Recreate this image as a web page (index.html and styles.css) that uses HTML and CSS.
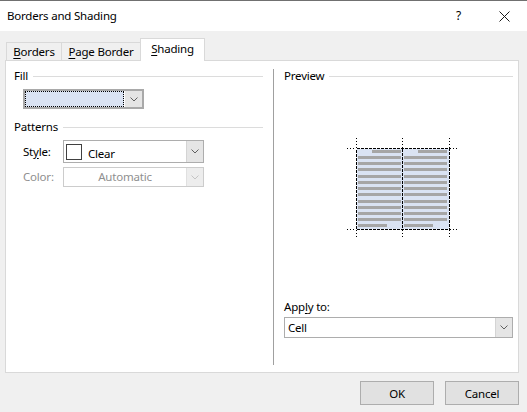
FILE: index.html
```html
<!DOCTYPE html>
<html>
<head>
<meta charset="utf-8">
<link rel="stylesheet" href="styles.css">
</head>
<body>
<div class="titlebar">
  <span class="title">Borders and Shading</span>
  <span class="help">?</span>
  <svg class="close" width="11" height="11" viewBox="0 0 11 11"><path d="M0.5 0.5 L10.5 10.5 M10.5 0.5 L0.5 10.5" stroke="#1a1a1a" stroke-width="1" fill="none"/></svg>
</div>
<div class="tabs">
  <div class="tab t-borders"><u>B</u>orders</div>
  <div class="tab t-page"><u>P</u>age Border</div>
  <div class="tab t-shading active"><u>S</u>hading</div>
</div>
<div class="panel">
  <div class="col left">
    <div class="group-h"><span>Fill</span><i class="rule"></i></div>
    <div class="combo fill">
      <div class="val"><div class="focus"></div></div>
      <div class="btn"><svg width="8" height="5" viewBox="0 0 8 5"><path d="M0.5 0.5 L4 4 L7.5 0.5" stroke="#606060" fill="none"/></svg></div>
    </div>
    <div class="group-h patterns"><span>Patterns</span><i class="rule"></i></div>
    <div class="row style-row">
      <span class="lbl">St<u>y</u>le:</span>
      <div class="combo style">
        <div class="val"><span class="swatch"></span><span class="clear">Clear</span></div>
        <div class="btn"><svg width="8" height="5" viewBox="0 0 8 5"><path d="M0.5 0.5 L4 4 L7.5 0.5" stroke="#606060" fill="none"/></svg></div>
      </div>
    </div>
    <div class="row color-row disabled">
      <span class="lbl">Color:</span>
      <div class="combo color">
        <div class="val center">Automatic</div>
        <div class="btn"><svg width="8" height="5" viewBox="0 0 8 5"><path d="M0.5 0.5 L4 4 L7.5 0.5" stroke="#c4c4c4" fill="none"/></svg></div>
      </div>
    </div>
  </div>
  <div class="divider"></div>
  <div class="col right">
    <div class="group-h"><span>Preview</span><i class="rule"></i></div>
    <svg class="preview" width="112" height="101" viewBox="347 138 112 101" shape-rendering="crispEdges">
      <rect x="357" y="149" width="92" height="80" fill="#dae3f3"/>
      <g fill="#a6a6a6">
        <rect x="372" y="150" width="29" height="3"/>
        <rect x="358" y="156" width="43" height="3"/>
        <rect x="358" y="162" width="43" height="3"/>
        <rect x="358" y="168" width="43" height="3"/>
        <rect x="358" y="175" width="43" height="3"/>
        <rect x="358" y="181" width="43" height="3"/>
        <rect x="358" y="187" width="43" height="3"/>
        <rect x="358" y="193" width="43" height="3"/>
        <rect x="358" y="200" width="43" height="3"/>
        <rect x="358" y="206" width="43" height="3"/>
        <rect x="358" y="212" width="43" height="3"/>
        <rect x="358" y="218" width="43" height="3"/>
        <rect x="358" y="224" width="29" height="3"/>
        <rect x="418" y="150" width="29" height="3"/>
        <rect x="404" y="156" width="43" height="3"/>
        <rect x="404" y="162" width="43" height="3"/>
        <rect x="404" y="168" width="43" height="3"/>
        <rect x="404" y="175" width="43" height="3"/>
        <rect x="404" y="181" width="43" height="3"/>
        <rect x="404" y="187" width="43" height="3"/>
        <rect x="404" y="193" width="43" height="3"/>
        <rect x="404" y="200" width="43" height="3"/>
        <rect x="404" y="206" width="43" height="3"/>
        <rect x="404" y="212" width="43" height="3"/>
        <rect x="404" y="218" width="43" height="3"/>
        <rect x="404" y="224" width="29" height="3"/>
      </g>
      <g stroke="#000" stroke-width="1" fill="none" stroke-dasharray="3 1">
        <rect x="356.5" y="148.5" width="93" height="81"/>
        <path d="M402.5 148.5 V229.5"/>
      </g>
      <g stroke="#000" stroke-width="1" fill="none" stroke-dasharray="1 2">
        <path d="M347 148.5 H356 M450 148.5 H459 M347 229.5 H356 M450 229.5 H459"/>
        <path d="M356.5 138 V148 M402.5 138 V148 M449.5 138 V148 M356.5 230 V239 M402.5 230 V239 M449.5 230 V239"/>
      </g>
    </svg>
    <div class="apply-lbl">App<u>l</u>y to:</div>
    <div class="combo apply">
      <div class="val">Cell</div>
      <div class="btn"><svg width="8" height="5" viewBox="0 0 8 5"><path d="M0.5 0.5 L4 4 L7.5 0.5" stroke="#606060" fill="none"/></svg></div>
    </div>
  </div>
</div>
<div class="footer">
  <button class="b">OK</button>
  <button class="b">Cancel</button>
</div>
</body>
</html>
```
FILE: styles.css
```css
* { box-sizing: border-box; }
html, body { margin: 0; padding: 0; }
body {
  width: 527px;
  height: 412px;
  overflow: hidden;
  background: #f0f0f0;
  font-family: "Noto Sans", "DejaVu Sans", sans-serif;
  font-size: 11.5px;
  letter-spacing: -0.2px;
  line-height: 16px;
  color: #000;
}
u { text-decoration: underline; text-underline-offset: 2px; }

.titlebar {
  height: 31px;
  background: #fff;
  border-top: 1px solid #707070;
  display: flex;
  align-items: center;
  padding-left: 7px;
}
.title { flex: 1; }
.help { margin-right: 38px; font-size: 12px; }
.close { margin-right: 17px; display: block; }

.tabs {
  height: 29px;
  display: flex;
  align-items: flex-end;
  padding-left: 6px;
}
.tab {
  height: 18px;
  border: 1px solid #d9d9d9;
  border-bottom: none;
  background: #f0f0f0;
  display: flex;
  align-items: center;
  justify-content: center;
  padding-top: 1px;
}
.t-borders { width: 56px; }
.t-page { width: 80px; margin-left: -1px; }
.t-shading { width: 65px; margin-left: -1px; }
.tab.active {
  height: 23px;
  background: #fff;
  margin-bottom: -1px;
  position: relative;
  padding-top: 0;
  padding-bottom: 2px;
}

.panel {
  margin-left: 5px;
  width: 514px;
  height: 313px;
  background: #fff;
  border: 1px solid #d9d9d9;
  display: flex;
}
.col.left { width: 267px; padding: 7px 10px 0 8px; }
.divider { width: 1px; background: #a0a0a0; margin: 8px 0 7px; }
.col.right { flex: 1; padding: 7px 5px 0 10px; }

.group-h { display: flex; align-items: center; gap: 5px; height: 16px; }
.rule { flex: 1; height: 1px; background: #dcdcdc; }
.patterns { margin-top: 10px; }

.combo {
  display: flex;
  border: 1px solid #adadad;
  background: #fff;
}
.combo .val { flex: 1; display: flex; align-items: center; padding-left: 3px; }
.combo .btn {
  width: 17px;
  background: #e5e5e5;
  border-left: 1px solid #d4d4d4;
  display: flex;
  align-items: center;
  justify-content: center;
}
.combo .btn svg { display: block; }

.combo.fill {
  margin: 5px 0 0 9px;
  width: 121px;
  height: 20px;
  border: 2px solid #a9a9a9;
}
.combo.fill .val { padding: 0 1px 0 0; }
.combo.fill .focus {
  width: 100%;
  height: 16px;
  background: #dae3f3;
  border: 1px dotted #000;
}
.combo.fill .btn { border-left: none; }

.row { display: flex; align-items: center; }
.lbl { width: 49px; padding-left: 9px; }
.style-row { margin-top: 5px; }
.combo.style { width: 141px; height: 23px; }
.combo.style .val { padding-left: 2px; }
.swatch {
  width: 16px;
  height: 16px;
  border: 1px solid #404040;
  background: #fff;
}
.clear { margin-left: 6px; padding-top: 4px; }

.color-row { margin-top: 4px; }
.disabled .lbl { color: #8f8f8f; }
.combo.color {
  width: 141px;
  height: 20px;
  border-color: #cccccc;
}
.combo.color .val.center { justify-content: center; color: #8f8f8f; padding-left: 0; }
.combo.color .btn { background: #ededed; border-left-color: #e0e0e0; }

.preview { display: block; margin: 54px 0 0 63px; }
.apply-lbl { margin-top: 60px; }
.combo.apply { margin-top: 2px; height: 21px; }

.footer {
  display: flex;
  justify-content: flex-end;
  gap: 11px;
  padding: 8px 8px 0 0;
}
.b {
  width: 74px;
  height: 24px;
  background: #e1e1e1;
  border: 1px solid #adadad;
  font-family: "Noto Sans", "DejaVu Sans", sans-serif;
  font-size: 11.5px;
  letter-spacing: -0.2px;
  color: #000;
  padding: 0;
}
```
